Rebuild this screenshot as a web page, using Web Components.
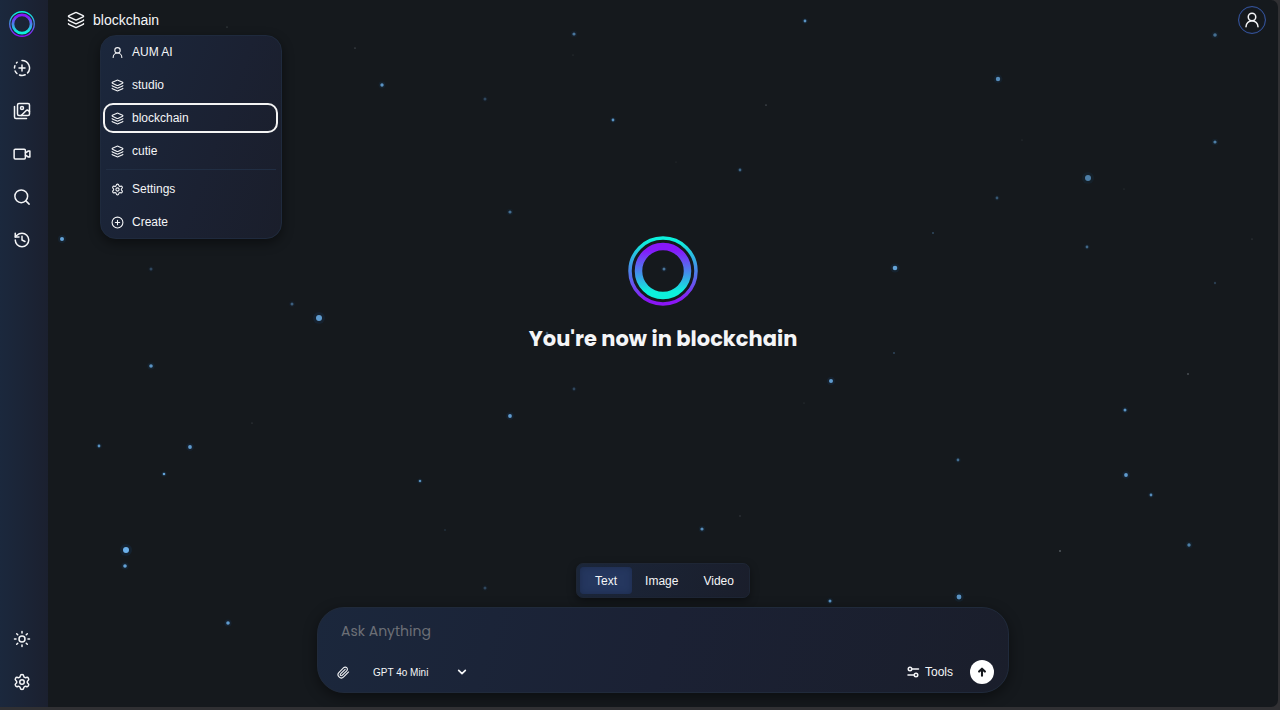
<!DOCTYPE html>
<html lang="en">
<head>
<meta charset="utf-8">
<meta name="viewport" content="width=device-width, initial-scale=1">
<title>AUM AI – blockchain</title>
<style>
  html, body { height: 100%; margin: 0; }
  body { background: #303033; color: #f4f5f7; font-family: "Liberation Sans", Arial, sans-serif; font-size: 12px; }
</style>
</head>
<body>
<aum-app></aum-app>
<script>
const ICONS = {
  layers: '<path d="M12.83 2.18a2 2 0 0 0-1.66 0L2.6 6.08a1 1 0 0 0 0 1.83l8.58 3.91a2 2 0 0 0 1.66 0l8.58-3.9a1 1 0 0 0 0-1.83z"/><path d="M2 12a1 1 0 0 0 .58.91l8.6 3.91a2 2 0 0 0 1.65 0l8.58-3.9A1 1 0 0 0 22 12"/><path d="M2 17a1 1 0 0 0 .58.91l8.6 3.91a2 2 0 0 0 1.65 0l8.58-3.9A1 1 0 0 0 22 17"/>',
  user: '<circle cx="12" cy="8" r="5"/><path d="M20 21a8 8 0 0 0-16 0"/>',
  newchat: '<path d="M12 2a10 10 0 0 1 7.38 16.75"/><path d="M12 8v8"/><path d="M16 12H8"/><path d="M2.5 8.875a10 10 0 0 0-.5 3"/><path d="M2.83 16a10 10 0 0 0 2.43 3.4"/><path d="M4.636 5.235a10 10 0 0 1 .891-.857"/><path d="M8.644 21.42a10 10 0 0 0 7.631-.38"/>',
  images: '<path d="M18 22H4a2 2 0 0 1-2-2V6"/><path d="m22 13-1.296-1.296a2.41 2.41 0 0 0-3.408 0L11 18"/><circle cx="12" cy="8" r="2"/><rect width="16" height="16" x="6" y="2" rx="2"/>',
  video: '<rect x="1.500" y="5.500" width="15" height="13" rx="1.500"/><path d="M16.500 10.500 20.500 8H22.500v8h-2L16.500 13.500"/>',
  search: '<circle cx="11" cy="11" r="8.500"/><path d="m21.500 21.500-4.300-4.300"/>',
  history: '<path d="M3 12a9 9 0 1 0 9-9 9.750 9.750 0 0 0-6.740 2.740L3 8"/><path d="M3 3v5h5"/><path d="M12 7v5l4 2"/>',
  sun: '<circle cx="12" cy="12" r="4"/><path d="M12 2v2M12 20v2M4.930 4.930l1.410 1.410M17.660 17.660l1.410 1.410M2 12h2M20 12h2M6.340 17.660l-1.410 1.410M19.070 4.930l-1.410 1.410"/>',
  settings: '<path d="M9.671 4.136a2.340 2.340 0 0 1 4.659 0 2.340 2.340 0 0 0 3.319 1.915 2.340 2.340 0 0 1 2.330 4.033 2.340 2.340 0 0 0 0 3.831 2.340 2.340 0 0 1-2.330 4.033 2.340 2.340 0 0 0-3.319 1.915 2.340 2.340 0 0 1-4.659 0 2.340 2.340 0 0 0-3.320-1.915 2.340 2.340 0 0 1-2.330-4.033 2.340 2.340 0 0 0 0-3.831A2.340 2.340 0 0 1 6.350 6.051a2.340 2.340 0 0 0 3.319-1.915"/><circle cx="12" cy="12" r="3"/>',
  plus: '<circle cx="12" cy="12" r="10"/><path d="M8 12h8M12 8v8"/>',
  clip: '<path d="m21.440 11.050-9.190 9.190a6 6 0 0 1-8.490-8.490l8.570-8.570A4 4 0 1 1 18 8.840l-8.590 8.570a2 2 0 0 1-2.830-2.830l8.490-8.480"/>',
  tools: '<circle cx="6" cy="6" r="3.500"/><path d="M10 6H23"/><circle cx="18" cy="18" r="3.500"/><path d="M2 18h12"/>',
  chevron: '<path d="m4 8 8 8 8-8"/>',
  up: '<path d="M12 21V5M5 11l7-7 7 7"/>'
};

class UiIcon extends HTMLElement {
  connectedCallback() {
    this.attachShadow({ mode: 'open' }).innerHTML = `
      <style>
        :host { display: inline-flex; flex: none; width: var(--icon-size, 18px); height: var(--icon-size, 18px); }
        svg { width: 100%; height: 100%; fill: none; stroke: currentColor; stroke-width: var(--icon-stroke, 2); stroke-linecap: round; stroke-linejoin: round; overflow: visible; }
      </style>
      <svg viewBox="0 0 24 24" aria-hidden="true">${ICONS[this.getAttribute('name')]}</svg>`;
  }
}
customElements.define('ui-icon', UiIcon);

class AumLogo extends HTMLElement {
  connectedCallback() {
    this.attachShadow({ mode: 'open' }).innerHTML = `
      <style>
        :host { display: block; flex: none; width: var(--logo-size, 26px); height: var(--logo-size, 26px); }
        svg { display: block; width: 100%; height: 100%; }
      </style>
      <svg viewBox="0 0 70 70" role="img" aria-label="AUM AI">
        <defs>
          <linearGradient id="down" x1="0" y1="0" x2="0" y2="1"><stop offset=".05" stop-color="#0df0dc"/><stop offset=".95" stop-color="#8a16f5"/></linearGradient>
          <linearGradient id="rise" x1="0" y1="0" x2="0" y2="1"><stop offset=".08" stop-color="#8618fa"/><stop offset=".92" stop-color="#0df0dc"/></linearGradient>
        </defs>
        <circle cx="35" cy="35" r="33" fill="none" stroke="url(#down)" stroke-width="3.500"/>
        <circle cx="35" cy="35" r="24.500" fill="none" stroke="url(#rise)" stroke-width="7.500"/>
      </svg>`;
  }
}
customElements.define('aum-logo', AumLogo);

/* Star field: x, y, radius, opacity in the frame's coordinate space */
const STARS = [
  [62,239,2,.9],[151,269,1.5,.3],[292,304,1.5,.45],[319,318,3,.85],[151,366,1.8,.8],[99,446,1.4,.8],[190,447,1.9,.85],
  [164,474,1.3,.9],[252,423,.6,.3],[420,481,1.3,.75],[445,530,1,.15],[126,550,3,1],[125,566,1.8,.9],[228,623,1.8,.85],
  [382,85,1.7,.8],[355,48,.6,.5],[227,27,.6,.4],[574,34,1.6,.6],[573,55,.6,.2],[485,99,1.5,.3],[613,120,1.4,.8],[510,212,1.6,.55],
  [740,170,1.4,.5],[766,105,.6,.6],[676,162,.6,.15],[805,21,1.4,.8],[998,79,2.2,.75],[1215,35,1.8,.55],[1215,142,1.600,.65],
  [1088,178,3,.65],[1022,140,.6,.2],[1124,189,.6,.2],[997,198,1.4,.4],[933,233,1.1,.3],[1087,247,1.4,.5],[1252,239,.6,.3],
  [895,268,2.300,.9],[1215,283,1.200,.25],[664,269,1.500,.6],[894,353,1,.3],[831,381,2,.85],[1188,374,.7,.6],[804,403,.6,.2],
  [574,389,1.400,.3],[510,416,1.900,.85],[1125,410,1.500,.8],[958,460,1.400,.55],[1126,475,1.900,.85],[1151,495,1.400,.75],
  [702,529,1.600,.75],[740,516,.8,.2],[1060,551,.7,.7],[1189,545,1.700,.65],[485,588,1.500,.3],[830,601,1.500,.8],
  [959,597,2.400,.8],[547,333,1.300,.4]
];
class StarField extends HTMLElement {
  connectedCallback() {
    const dots = STARS.map(([x, y, r, o]) =>
      (r > 1.2 ? `<circle cx="${x}" cy="${y}" r="${r * 2}" fill="#1b5a96" opacity="${o * .16}"/>` : '') +
      `<circle cx="${x}" cy="${y}" r="${r}" fill="${r > .8 ? '#6cb0ea' : '#c8d2dc'}" opacity="${o}"/>`).join('');
    this.attachShadow({ mode: 'open' }).innerHTML = `
      <style>
        :host { display: block; position: absolute; inset: 0; pointer-events: none; }
        svg { display: block; width: 100%; height: 100%; }
      </style>
      <svg viewBox="0 0 1278 707" preserveAspectRatio="xMidYMid slice" aria-hidden="true">${dots}</svg>`;
  }
}
customElements.define('star-field', StarField);

class AumSidebar extends HTMLElement {
  connectedCallback() {
    this.attachShadow({ mode: 'open' }).innerHTML = `
      <style>
        :host { display: block; position: relative; background: linear-gradient(90deg, #1b283d, #1b202f); }
        nav { box-sizing: border-box; height: 100%; display: flex; flex-direction: column; align-items: center; padding: 11px 4px 4px 0; }
        .home { margin-bottom: 9px; }
        button { width: 44px; height: 43px; padding: 0; border: 0; background: none; color: inherit; display: grid; place-items: center; cursor: pointer; }
        .spacer { flex: 1; }
      </style>
      <nav aria-label="Main">
        <a class="home" href="#" aria-label="Home"><aum-logo></aum-logo></a>
        <button aria-label="New chat"><ui-icon name="newchat"></ui-icon></button>
        <button aria-label="Images"><ui-icon name="images"></ui-icon></button>
        <button aria-label="Videos"><ui-icon name="video"></ui-icon></button>
        <button aria-label="Search"><ui-icon name="search"></ui-icon></button>
        <button aria-label="History"><ui-icon name="history"></ui-icon></button>
        <span class="spacer"></span>
        <button aria-label="Theme"><ui-icon name="sun"></ui-icon></button>
        <button aria-label="Settings"><ui-icon name="settings"></ui-icon></button>
      </nav>`;
  }
}
customElements.define('aum-sidebar', AumSidebar);

class MenuItem extends HTMLElement {
  connectedCallback() {
    this.attachShadow({ mode: 'open' }).innerHTML = `
      <style>
        :host { display: block; }
        button { box-sizing: border-box; width: 100%; height: 30px; padding: 0 6px; border: 2px solid transparent; border-radius: 10px; background: none; color: inherit; font: inherit; text-align: left; display: flex; align-items: center; gap: 8px; cursor: pointer; }
        :host([selected]) button { border-color: #f4f4f4; }
        ui-icon { --icon-size: 13px; }
      </style>
      <button role="menuitem"><ui-icon name="${this.getAttribute('icon')}"></ui-icon><slot></slot></button>`;
  }
}
customElements.define('menu-item', MenuItem);

class SpaceMenu extends HTMLElement {
  connectedCallback() {
    this.attachShadow({ mode: 'open' }).innerHTML = `
      <style>
        :host { display: block; box-sizing: border-box; width: 182px; padding: 1px 3px 1px 2px; border: 1px solid #1f2a3d; border-radius: 16px; background: linear-gradient(110deg, #1b273c, #1b2132 60%, #1a1e2b); box-shadow: 0 4px 12px rgba(0,0,0,.45); }
        div { display: flex; flex-direction: column; gap: 3px; }
        hr { width: 170px; height: 1px; margin: 0 auto 1px; border: 0; background: #212e43; }
      </style>
      <div role="menu" aria-label="Spaces"><slot></slot><hr><slot name="actions"></slot></div>`;
  }
}
customElements.define('space-menu', SpaceMenu);

class AumHeader extends HTMLElement {
  connectedCallback() {
    this.attachShadow({ mode: 'open' }).innerHTML = `
      <style>
        :host { display: flex; align-items: center; justify-content: space-between; height: 40px; padding: 0 12px 0 19px; position: relative; z-index: 1; }
        button { padding: 0; background: none; border: 0; color: inherit; font: inherit; cursor: pointer; }
        .space { display: flex; align-items: center; gap: 8px; font-size: 14px; line-height: 20px; }
        .avatar { box-sizing: border-box; width: 28px; height: 28px; border: 1px solid #34539c; border-radius: 50%; display: grid; place-items: center; box-shadow: inset 0 0 1px #34539c; }
        space-menu { position: absolute; top: 35px; left: 52px; }
      </style>
      <button class="space" aria-haspopup="menu" aria-expanded="true"><ui-icon name="layers"></ui-icon>blockchain</button>
      <button class="avatar" aria-label="Account"><ui-icon name="user"></ui-icon></button>
      <space-menu>
        <menu-item icon="user">AUM AI</menu-item>
        <menu-item icon="layers">studio</menu-item>
        <menu-item icon="layers" selected>blockchain</menu-item>
        <menu-item icon="layers">cutie</menu-item>
        <menu-item icon="settings" slot="actions">Settings</menu-item>
        <menu-item icon="plus" slot="actions">Create</menu-item>
      </space-menu>`;
  }
}
customElements.define('aum-header', AumHeader);

class AumHero extends HTMLElement {
  connectedCallback() {
    this.attachShadow({ mode: 'open' }).innerHTML = `
      <style>
        :host { display: flex; flex-direction: column; align-items: center; justify-content: center; gap: 17px; padding-bottom: 12px; }
        aum-logo { --logo-size: 70px; }
        h1 { margin: 0; font: 700 21px/32px Poppins, Inter, sans-serif; text-align: center; }
      </style>
      <aum-logo></aum-logo>
      <h1><slot></slot></h1>`;
  }
}
customElements.define('aum-hero', AumHero);

class ModeTabs extends HTMLElement {
  connectedCallback() {
    this.attachShadow({ mode: 'open' }).innerHTML = `
      <style>
        :host { display: flex; align-self: center; padding: 3px; border: 1px solid #1e2635; border-radius: 7px; background: linear-gradient(110deg, #1b263a, #1a1e2b); box-shadow: 0 3px 8px rgba(0,0,0,.4); }
        div { display: flex; gap: 1px; }
        button { height: 27px; padding: 0 15px; border: 0; border-radius: 4px; background: none; color: inherit; font: inherit; cursor: pointer; }
        button + button { padding: 0 12px; }
        [aria-selected="true"] { background: #25375f; box-shadow: inset 0 0 6px #1d2b4c; }
      </style>
      <div role="tablist" aria-label="Mode">
        <button role="tab" aria-selected="true">Text</button>
        <button role="tab" aria-selected="false">Image</button>
        <button role="tab" aria-selected="false">Video</button>
      </div>`;
  }
}
customElements.define('mode-tabs', ModeTabs);

class PromptBox extends HTMLElement {
  connectedCallback() {
    this.attachShadow({ mode: 'open' }).innerHTML = `
      <style>
        :host { display: block; align-self: center; box-sizing: border-box; width: 692px; max-width: 94%; padding: 10px 14px 8px 19px; border: 1px solid #202a3b; border-radius: 27px; background: linear-gradient(105deg, #1b273c, #1b2134 50%, #1a1e2b); box-shadow: 0 4px 14px rgba(0,0,0,.45); }
        input { box-sizing: border-box; display: block; width: 100%; height: 26px; padding: 0 4px; border: 0; outline: 0; background: none; color: inherit; font: 400 14px/26px Poppins, Inter, sans-serif; }
        input::placeholder { color: #6c6f76; opacity: 1; }
        .row { display: flex; align-items: center; margin-top: 16px; }
        button { padding: 0; border: 0; background: none; color: inherit; font: inherit; display: flex; align-items: center; cursor: pointer; }
        .clip { --icon-size: 13px; }
        .model { display: grid; grid-template-columns: 94px; align-items: center; margin-left: 23px; --icon-size: 10px; --icon-stroke: 4; }
        .model > * { grid-area: 1 / 1; }
        .model ui-icon { justify-self: end; pointer-events: none; }
        select { appearance: none; width: 100%; height: 20px; padding: 0; border: 0; background: none; color: inherit; font: inherit; font-size: 10px; }
        .tools { gap: 6px; margin-left: auto; --icon-size: 12px; --icon-stroke: 3; }
        .send { width: 24px; height: 24px; margin-left: 17px; justify-content: center; border-radius: 50%; background: #fff; color: #15181d; --icon-size: 10px; --icon-stroke: 5; }
      </style>
      <form onsubmit="return false">
        <input type="text" aria-label="Prompt" placeholder="Ask Anything">
        <div class="row">
          <button type="button" class="clip" aria-label="Attach file"><ui-icon name="clip"></ui-icon></button>
          <label class="model"><select aria-label="Model"><option>GPT 4o Mini</option></select><ui-icon name="chevron"></ui-icon></label>
          <button type="button" class="tools"><ui-icon name="tools"></ui-icon>Tools</button>
          <button type="submit" class="send" aria-label="Send"><ui-icon name="up"></ui-icon></button>
        </div>
      </form>`;
  }
}
customElements.define('prompt-box', PromptBox);

class AumApp extends HTMLElement {
  connectedCallback() {
    this.attachShadow({ mode: 'open' }).innerHTML = `
      <style>
        :host { display: block; box-sizing: border-box; height: 100vh; min-height: 480px; padding: 0 2px 3px 0; }
        .frame { position: relative; display: grid; grid-template-columns: 48px 1fr; height: 100%; overflow: hidden; border-radius: 0 7px 7px 0; background: #15191d; }
        main { position: relative; display: flex; flex-direction: column; min-width: 0; box-sizing: border-box; padding-bottom: 14px; }
        aum-hero { flex: 1; }
        mode-tabs { margin-bottom: 9px; }
      </style>
      <div class="frame">
        <star-field></star-field>
        <aum-sidebar></aum-sidebar>
        <main>
          <aum-header></aum-header>
          <aum-hero>You're now in blockchain</aum-hero>
          <mode-tabs></mode-tabs>
          <prompt-box></prompt-box>
        </main>
      </div>`;
  }
}
customElements.define('aum-app', AumApp);
</script>
</body>
</html>
